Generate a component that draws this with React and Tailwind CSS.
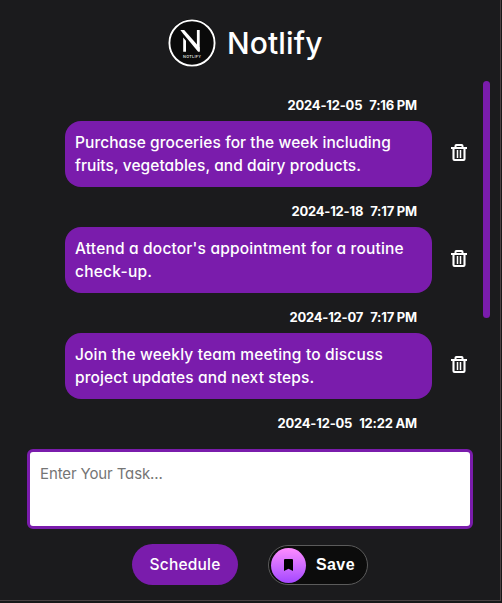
const tasks = [
  { date: '2024-12-05', time: '7:16 PM', lines: [['Purchase groceries for the week including', 'tracking-[0.07px]'], ['fruits, vegetables, and dairy products.', 'tracking-[0.06px]']] },
  { date: '2024-12-18', time: '7:17 PM', lines: [["Attend a doctor's appointment for a routine", 'tracking-[0.18px]'], ['check-up.', 'tracking-[0.25px]']] },
  { date: '2024-12-07', time: '7:17 PM', lines: [['Join the weekly team meeting to discuss', 'tracking-[0.17px]'], ['project updates and next steps.', 'tracking-[0.14px]']] },
  { date: '2024-12-05', time: '12:22 AM', lines: null },
];

function Logo() {
  return (
    <svg width="48" height="48" viewBox="0 0 48 48" className="shrink-0">
      <circle cx="24" cy="24" r="24" fill="#0a0a0a" />
      <circle cx="24" cy="24" r="22.6" fill="#0a0a0a" stroke="#fff" strokeWidth="1.9" />
      <path d="M12.4 11h3.8L31.6 28.5v4.3h-1.5L15.4 15z" fill="#fff" />
      <path d="M15.2 18.5l2.8 3.2v11.1h-2.8zM28.9 11h2.8v21.8l-2.8-3z" fill="#fff" />
      <text x="24" y="38.8" textAnchor="middle" textLength="18" fontSize="3.8" fontWeight="600" fill="#ddd" fontFamily="Inter, sans-serif">NOTLIFY</text>
    </svg>
  );
}

function TrashIcon() {
  return (
    <svg width="16" height="18" viewBox="0 0 16 18" fill="none" stroke="#fff" className="shrink-0">
      <path d="M0 4h16" strokeWidth="2" />
      <path d="M4.5 3.5V1.8Q4.5 1 5.3 1h5.4q.8 0 .8.8v1.7" strokeWidth="2" />
      <path d="M2.5 4.5V15q0 1 1 1h9q1 0 1-1V4.5" strokeWidth="2.1" />
      <path d="M6.5 6v8M9.5 6v8" strokeWidth="1.5" />
    </svg>
  );
}

function Task({ task }) {
  return (
    <li className="h-[106px] shrink-0">
      <div className="flex h-8 w-[352px] items-center justify-end gap-[7px] whitespace-pre pt-[2px] text-[13px] font-bold tracking-[-0.2px]">
        <span>{task.date}</span>
        <span>{task.time}</span>
      </div>
      {task.lines && (
        <div className="flex items-center gap-[19px]">
          <div className="h-[66px] w-[367px] rounded-2xl bg-[#7a1cac] px-[10px] py-[10px] text-[15.5px] font-medium leading-[23px]">
            {task.lines.map(([text, tracking]) => (
              <p key={text} className={`whitespace-nowrap ${tracking}`}>{text}</p>
            ))}
          </div>
          <button aria-label="Delete" className="pb-[3px]"><TrashIcon /></button>
        </div>
      )}
    </li>
  );
}

export default function App() {
  return (
    <div className="h-[603px] w-[502px] overflow-hidden bg-[#171718] font-['Inter',sans-serif] text-white [font-feature-settings:'cv11'_1]">
      <main className="flex h-[601px] w-[501px] flex-col border-b border-r border-[#4b4143] bg-[#1b1b1d]">
        <header className="flex h-[81px] shrink-0 items-start gap-[11px] pl-[168px] pt-[19px]">
          <Logo />
          <h1 className="text-[30px] font-medium leading-[48px] tracking-[0.1px]">Notlify</h1>
        </header>
        <section className="flex h-[360px] shrink-0 justify-between overflow-hidden pl-[65px] pr-[10px]">
          <ul className="flex flex-col pt-2">
            {tasks.map((task) => <Task key={task.date + task.time} task={task} />)}
          </ul>
          <div className="h-[237px] w-[7px] rounded-full bg-[#7a1cac]" />
        </section>
        <textarea
          placeholder="Enter Your Task..."
          className="ml-[27px] mt-2 block h-20 w-[446px] shrink-0 resize-none rounded-md border-[3px] border-[#7a1cac] bg-white px-[10px] py-[10px] text-[15px] leading-6 tracking-[-0.12px] text-black outline-none placeholder:text-[#757575]"
        />
        <div className="mt-[15px] flex items-start gap-[30px] pl-[132px]">
          <button className="h-[41px] w-[106px] rounded-full bg-[#7a1cac] text-[15.5px] font-medium tracking-[0.2px]">Schedule</button>
          <button className="mt-px flex h-10 w-[100px] items-center gap-[10px] rounded-full border border-[#5b5b5b] bg-[#0c0c0c] pl-[2px] font-['Liberation_Sans',sans-serif] text-base font-bold tracking-[0.4px]">
            <span className="flex size-[35px] items-center justify-center rounded-full bg-linear-to-b from-[#ff8bff] to-[#a545ff]">
              <svg width="9" height="12" viewBox="0 0 9 12"><path d="M1 0h7q1 0 1 1v11L4.5 9.7 0 12V1q0-1 1-1z" fill="#000" /></svg>
            </span>
            Save
          </button>
        </div>
      </main>
    </div>
  );
}
